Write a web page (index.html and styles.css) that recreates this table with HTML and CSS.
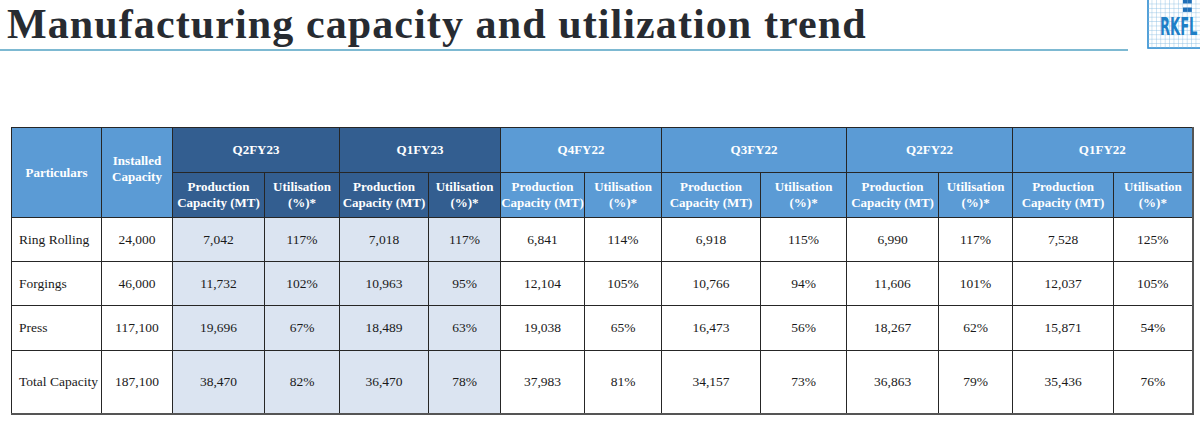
FILE: index.html
```html
<!DOCTYPE html>
<html>
<head>
<meta charset="utf-8">
<link rel="stylesheet" href="styles.css">
</head>
<body>
<div class="top">
  <div class="title-wrap"><h1 class="title">Manufacturing capacity and utilization trend</h1></div>
  <svg class="logo" width="54" height="50" viewBox="0 0 54 50">
    <defs>
      <pattern id="g" x="2" y="0" width="4.4" height="4.4" patternUnits="userSpaceOnUse">
        <path d="M4.4 0V4.4H0" fill="none" stroke="#7fb8e0" stroke-width="0.8"/>
      </pattern>
    </defs>
    <rect x="2" y="-2" width="70" height="50" fill="#fff" stroke="#2a8ad0" stroke-width="1.6"/>
    <rect x="2" y="-2" width="70" height="50" fill="url(#g)"/>
    <rect x="37" y="0" width="4.4" height="3.5" fill="#1f6fb8"/>
    <rect x="41.4" y="0" width="4.4" height="3.5" fill="#1f6fb8"/>
    <rect x="37" y="7.5" width="4.4" height="4.4" fill="#1f6fb8"/>
    <rect x="41.4" y="7.5" width="4.4" height="4.4" fill="#1f6fb8"/>
    <text x="0" y="0" class="logo-text" transform="translate(14 35) scale(1 1.65)">RKFL</text>
  </svg>
</div>

<table class="cap">
  <colgroup>
    <col style="width:90px"><col style="width:71px">
    <col style="width:92px"><col style="width:75px">
    <col style="width:89px"><col style="width:72px">
    <col style="width:84px"><col style="width:77px">
    <col style="width:99px"><col style="width:86px">
    <col style="width:92px"><col style="width:74px">
    <col style="width:101px"><col style="width:79px">
  </colgroup>
  <thead>
    <tr class="h1r">
      <th rowspan="2" class="lb">Particulars</th>
      <th rowspan="2" class="lb inst">Installed<br>Capacity</th>
      <th colspan="2" class="db">Q2FY23</th>
      <th colspan="2" class="db">Q1FY23</th>
      <th colspan="2" class="lb">Q4FY22</th>
      <th colspan="2" class="lb">Q3FY22</th>
      <th colspan="2" class="lb">Q2FY22</th>
      <th colspan="2" class="lb">Q1FY22</th>
    </tr>
    <tr class="h2r">
      <th class="db">Production<br>Capacity (MT)</th><th class="db">Utilisation<br>(%)*</th>
      <th class="db">Production<br>Capacity (MT)</th><th class="db">Utilisation<br>(%)*</th>
      <th class="lb">Production<br>Capacity (MT)</th><th class="lb">Utilisation<br>(%)*</th>
      <th class="lb">Production<br>Capacity (MT)</th><th class="lb">Utilisation<br>(%)*</th>
      <th class="lb">Production<br>Capacity (MT)</th><th class="lb">Utilisation<br>(%)*</th>
      <th class="lb">Production<br>Capacity (MT)</th><th class="lb">Utilisation<br>(%)*</th>
    </tr>
  </thead>
  <tbody>
    <tr class="r1">
      <td class="name">Ring Rolling</td><td>24,000</td>
      <td class="sh">7,042</td><td class="sh">117%</td><td class="sh">7,018</td><td class="sh">117%</td>
      <td>6,841</td><td>114%</td><td>6,918</td><td>115%</td><td>6,990</td><td>117%</td><td>7,528</td><td>125%</td>
    </tr>
    <tr class="r2">
      <td class="name">Forgings</td><td>46,000</td>
      <td class="sh">11,732</td><td class="sh">102%</td><td class="sh">10,963</td><td class="sh">95%</td>
      <td>12,104</td><td>105%</td><td>10,766</td><td>94%</td><td>11,606</td><td>101%</td><td>12,037</td><td>105%</td>
    </tr>
    <tr class="r3">
      <td class="name">Press</td><td>117,100</td>
      <td class="sh">19,696</td><td class="sh">67%</td><td class="sh">18,489</td><td class="sh">63%</td>
      <td>19,038</td><td>65%</td><td>16,473</td><td>56%</td><td>18,267</td><td>62%</td><td>15,871</td><td>54%</td>
    </tr>
    <tr class="r4">
      <td class="name">Total Capacity</td><td>187,100</td>
      <td class="sh">38,470</td><td class="sh">82%</td><td class="sh">36,470</td><td class="sh">78%</td>
      <td>37,983</td><td>81%</td><td>34,157</td><td>73%</td><td>36,863</td><td>79%</td><td>35,436</td><td>76%</td>
    </tr>
  </tbody>
</table>
</body>
</html>
```

FILE: styles.css
```css
html, body {
  margin: 0;
  padding: 0;
  background: #ffffff;
}
body {
  width: 1200px;
  height: 422px;
  overflow: hidden;
  font-family: "Liberation Serif", "Times New Roman", serif;
  color: #1a1a1a;
}
.top {
  display: flex;
  align-items: flex-start;
  gap: 18px;
  height: 52px;
}
.title-wrap {
  width: 1128px;
  height: 49px;
  border-bottom: 2px solid #7db9d2;
  flex: none;
}
.title {
  margin: 0;
  padding-left: 7px;
  font-size: 42px;
  letter-spacing: 1.1px;
  line-height: 48px;
  font-weight: bold;
  color: #272b31;
  white-space: nowrap;
}
.logo {
  flex: none;
  display: block;
}
.logo-text {
  font-family: "DejaVu Sans Condensed", "DejaVu Sans", sans-serif;
  font-weight: bold;
  font-size: 14.5px;
  fill: #1f7fc6;
}
.cap {
  margin: 75px 0 0 11px;
  border-collapse: collapse;
  table-layout: fixed;
  width: 1181px;
  font-size: 13.5px;
}
.cap th, .cap td {
  border: 1px solid #262626;
  text-align: center;
  vertical-align: middle;
  padding: 0;
  white-space: nowrap;
}
.cap th {
  color: #ffffff;
  font-weight: bold;
  font-size: 13px;
  line-height: 16px;
}
.cap .lb { background: #5b9bd5; }
.cap .db { background: #335e90; }
.cap .inst { padding-bottom: 8px; }
.h1r { height: 45px; }
.h2r { height: 45px; }
.r1, .r2 { height: 44px; }
.r3 { height: 45px; }
.r4 { height: 63px; }
.cap td {
  color: #1a1a1a;
  background: #ffffff;
}
.cap td.sh { background: #dbe4f1; }
.cap td.name {
  text-align: left;
  padding-left: 7px;
}
.cap tbody tr:last-child td { border-bottom: 2px solid #555; }
.cap td:last-child, .cap th:last-child { border-right: 2px solid #555; }
```
